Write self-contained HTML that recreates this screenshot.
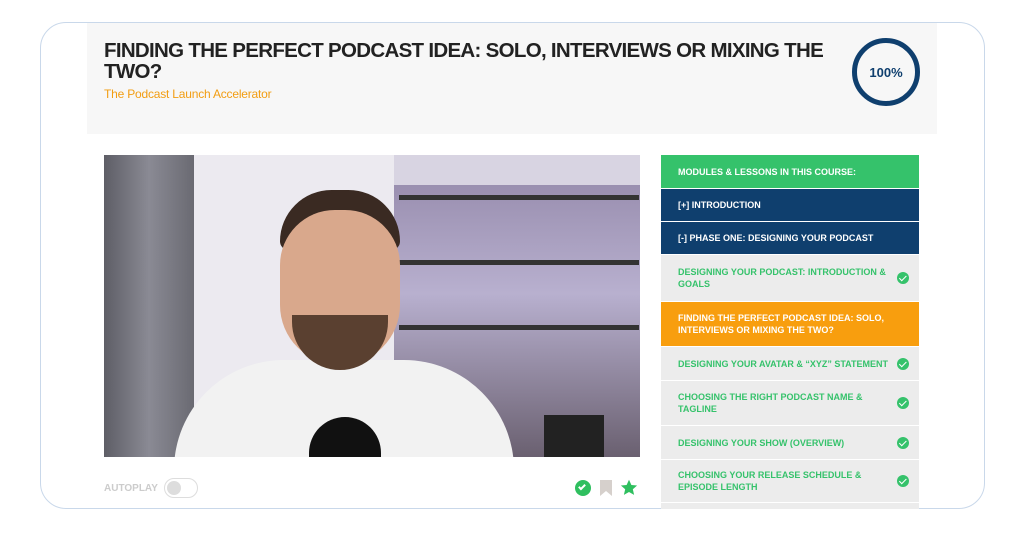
<!DOCTYPE html>
<html><head><style>
*{margin:0;padding:0;box-sizing:border-box}
body{width:1024px;height:536px;background:#fff;font-family:"Liberation Sans",sans-serif;position:relative;overflow:hidden}
.card{position:absolute;left:40px;top:22px;width:945px;height:487px;border:1.5px solid #c9d8ea;border-radius:26px;background:#fff}
.hdr{position:absolute;left:87px;top:23px;width:850px;height:111px;background:#f7f7f7}
h1{position:absolute;left:104px;top:40px;width:760px;font-size:20.5px;line-height:21px;font-weight:bold;color:#222;letter-spacing:-0.7px}
.sub{position:absolute;left:104px;top:87px;font-size:12px;color:#f29d12;letter-spacing:-0.2px}
.ring{position:absolute;left:852px;top:38px;width:68px;height:68px;border:5px solid #0f3f6e;border-radius:50%;display:flex;align-items:center;justify-content:center;font-weight:bold;font-size:13px;color:#0f3f6e}
.vid{position:absolute;left:104px;top:155px;width:536px;height:302px;overflow:hidden;background:#d8d4e2}
.side{position:absolute;left:661px;top:155px;width:258px}
.r{border-bottom:1.5px solid #fff;padding:0 17px;display:flex;align-items:center;font-size:9px;font-weight:bold;line-height:12px;position:relative}
.g{background:#ececec;color:#35c26b}
.g i{position:absolute;right:10px;top:50%;margin-top:-6px;width:12px;height:12px;border-radius:50%;background:#35c26b}
.g i:after{content:"";position:absolute;left:3.5px;top:2px;width:3px;height:5.5px;border:solid #fff;border-width:0 1.8px 1.8px 0;transform:rotate(45deg)}
.b{background:#0f3f6e;color:#fff}
</style></head><body>
<div class="card"></div>
<div class="hdr"></div>
<h1>FINDING THE PERFECT PODCAST IDEA: SOLO, INTERVIEWS OR MIXING THE TWO?</h1>
<div class="sub">The Podcast Launch Accelerator</div>
<div class="ring">100%</div>
<div class="vid">
 <div style="position:absolute;left:0;top:0;width:90px;height:302px;background:linear-gradient(90deg,#5e5e66,#8a8a94,#6a6a72)"></div>
 <div style="position:absolute;left:90px;top:0;width:200px;height:302px;background:#eceaf0"></div>
 <div style="position:absolute;left:290px;top:30px;width:246px;height:272px;background:linear-gradient(#9a8fb0,#b8b0cf 40%,#6a6070)"></div>
 <div style="position:absolute;left:295px;top:40px;width:240px;height:5px;background:#333"></div>
 <div style="position:absolute;left:295px;top:105px;width:240px;height:5px;background:#333"></div>
 <div style="position:absolute;left:295px;top:170px;width:240px;height:5px;background:#333"></div>
 <div style="position:absolute;left:70px;top:205px;width:340px;height:110px;border-radius:120px 120px 0 0;background:#f2f2f2"></div>
 <div style="position:absolute;left:176px;top:35px;width:120px;height:60px;border-radius:60px 60px 10px 10px;background:#3a2a22"></div>
 <div style="position:absolute;left:176px;top:55px;width:120px;height:155px;border-radius:55px 55px 60px 60px;background:#d9a88c"></div>
 <div style="position:absolute;left:188px;top:160px;width:96px;height:55px;border-radius:0 0 50px 50px;background:#5a4030"></div>
 <div style="position:absolute;left:205px;top:262px;width:72px;height:60px;border-radius:36px 36px 0 0;background:#111"></div>
 <div style="position:absolute;left:440px;top:260px;width:60px;height:42px;background:#222"></div>
</div>
<div style="position:absolute;left:104px;top:483px;font-size:10px;font-weight:bold;color:#ccc">AUTOPLAY</div>
<div style="position:absolute;left:164px;top:478px;width:34px;height:20px;border:1.5px solid #ddd;border-radius:10px"><div style="position:absolute;left:2px;top:2px;width:14px;height:14px;border-radius:50%;background:#ddd"></div></div>
<div style="position:absolute;left:575px;top:480px;width:16px;height:16px;border-radius:50%;background:#2fbf5f"><div style="position:absolute;left:5px;top:3px;width:4px;height:7px;border:solid #fff;border-width:0 2px 2px 0;transform:rotate(45deg)"></div></div>
<svg style="position:absolute;left:600px;top:480px" width="12" height="16"><path d="M0 0H12V16L6 11L0 16Z" fill="#d6d0cc"/></svg>
<svg style="position:absolute;left:620px;top:479px" width="18" height="18" viewBox="0 0 24 24"><path d="M12 1l3.2 7 7.6.7-5.7 5 1.7 7.5L12 17.3 5.2 21.2l1.7-7.5-5.7-5 7.6-.7z" fill="#2fbf5f"/></svg>
<div class="side">
 <div class="r" style="background:#35c26b;color:#fff;height:34px">MODULES &amp; LESSONS IN THIS COURSE:</div>
 <div class="r b" style="height:33px">[+] INTRODUCTION</div>
 <div class="r b" style="height:33px">[-] PHASE ONE: DESIGNING YOUR PODCAST</div>
 <div class="r g" style="height:47px">DESIGNING YOUR PODCAST: INTRODUCTION &amp;<br>GOALS<i></i></div>
 <div class="r" style="background:#f89e0e;color:#fff;height:45px">FINDING THE PERFECT PODCAST IDEA: SOLO,<br>INTERVIEWS OR MIXING THE TWO?</div>
 <div class="r g" style="height:34px">DESIGNING YOUR AVATAR &amp; “XYZ” STATEMENT<i></i></div>
 <div class="r g" style="height:45px">CHOOSING THE RIGHT PODCAST NAME &amp;<br>TAGLINE<i></i></div>
 <div class="r g" style="height:34px">DESIGNING YOUR SHOW (OVERVIEW)<i></i></div>
 <div class="r g" style="height:43px">CHOOSING YOUR RELEASE SCHEDULE &amp;<br>EPISODE LENGTH<i></i></div>
 <div class="r g" style="height:6px;border:0"></div>
</div>
</body></html>
